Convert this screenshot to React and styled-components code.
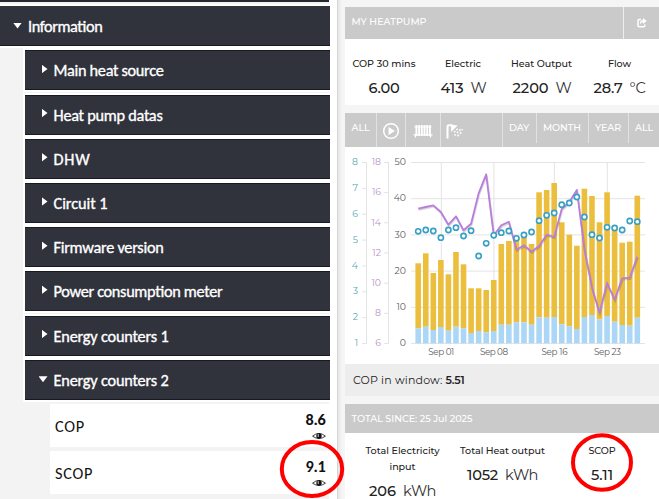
import React from 'react';
import styled, { createGlobalStyle } from 'styled-components';

const sections = [
  { name: 'Main heat source', w: 110 },
  { name: 'Heat pump datas', w: 109 },
  { name: 'DHW', w: 37 },
  { name: 'Circuit 1', w: 54 },
  { name: 'Firmware version', w: 110 },
  { name: 'Power consumption meter', w: 168.5 },
  { name: 'Energy counters 1', w: 115 },
  { name: 'Energy counters 2', w: 115, open: true },
];

const heat = [263.3, 253.3, 273, 260, 274.3, 252, 264.3, 288.3, 288.3, 290, 280, 244, 241, 237, 235, 244, 192.3, 190, 183, 222.3, 234.7, 245.7, 188.7, 196, 222.3, 192.3, 229, 242.7, 241.7, 195.7];
const elec = [328.3, 326.7, 330, 327, 330.7, 326.7, 328.3, 333, 331, 332.3, 331, 324.7, 324.7, 322.3, 322.3, 324.7, 317.3, 317.7, 317, 324.3, 326.3, 329, 317, 315, 319.3, 316, 321.7, 325, 325.7, 317.7];
const cop = [231.3, 230, 231, 237.7, 230, 227.7, 236, 230.7, 256, 243.3, 235.3, 232.7, 231, 238.3, 235, 232, 220.7, 215.3, 213, 204.7, 203, 197, 217, 234.7, 238, 227.3, 228, 230, 221, 221.7];
const outside = [208.7, 207, 205.3, 212, 224.7, 216.3, 230.3, 223.7, 193.3, 174.3, 235.3, 225.3, 221.7, 249.7, 245.3, 251.7, 246, 234.7, 237, 209, 202, 190, 249, 287.7, 312.7, 283, 299.7, 278.3, 277.7, 256.7];

const dayX = (i) => 418.2 + i * 7.555;

function Eye() {
  return (
    <svg width="14" height="8" viewBox="0 0 14 8">
      <path d="M.6 4.2Q7-1.4 13.4 4.2Q7 8.8.6 4.2Z" fill="none" stroke="#222" strokeWidth=".9" />
      <circle cx="7" cy="4" r="2.7" fill="#111" />
      <path d="M6.2 2v3" stroke="#fff" strokeWidth=".8" />
    </svg>
  );
}

function Marker({ small }) {
  return small ? (
    <svg width="62" height="59" viewBox="0 0 62 59">
      <ellipse cx="31" cy="29.5" rx="29" ry="27.3" fill="none" stroke="#f00" strokeWidth="4" />
    </svg>
  ) : (
    <svg width="66" height="60" viewBox="0 0 66 60">
      <ellipse cx="33" cy="30" rx="30.2" ry="27" fill="none" stroke="#f00" strokeWidth="4" />
    </svg>
  );
}

function Chart() {
  const line = outside.map((y, i) => `${dayX(i)},${y}`).join(' ');
  return (
    <ChartSvg viewBox="345 147 314 217">
      <g stroke="#e4e4e4" strokeWidth="1">
        {[0, 1, 2, 3, 4, 5].map((n) => (
          <path key={n} d={`M411 ${343.5 - n * 36.2}H645`} />
        ))}
        {[441.3, 493.9, 554.4, 607.3].map((x) => <path key={x} d={`M${x} 162V343`} />)}
        <path d="M366.5 162V343.5M388.5 162V343.5" />
        {[0, 1, 2, 3, 4, 5, 6, 7].map((n) => <path key={n} d={`M362 ${343.5 - n * 25.86}h4.5`} />)}
        {[0, 1, 2, 3, 4, 5, 6].map((n) => <path key={n} d={`M384 ${343.5 - n * 30.17}h4.5`} />)}
      </g>
      <g fontSize="9.3" textAnchor="end">
        <g fill="#55a9b9">
          {[1, 2, 3, 4, 5, 6, 7, 8].map((n) => <text key={n} x="358" y={346.2 - (n - 1) * 25.86}>{n}</text>)}
        </g>
        <g fill="#b795c8">
          {[6, 8, 10, 12, 14, 16, 18].map((n) => <text key={n} x="381" y={346.2 - (n - 6) * 15.08}>{n}</text>)}
        </g>
        <g fill="#5c5c5c">
          {[0, 10, 20, 30, 40, 50].map((n) => <text key={n} x="406" y={346.2 - n * 3.62}>{n}</text>)}
        </g>
      </g>
      <g fontSize="8.8" fill="#5c5c5c" textAnchor="middle">
        <text x="441.3" y="355" textLength="26">Sep 01</text>
        <text x="494" y="355" textLength="28">Sep 08</text>
        <text x="554.5" y="355" textLength="26">Sep 16</text>
        <text x="607.5" y="355" textLength="27">Sep 23</text>
      </g>
      {heat.map((y, i) => (
        <g key={i}>
          <rect x={dayX(i) - 2.8} y={y} width="5.6" height={elec[i] - y} fill="#ebbf3d" />
          <rect x={dayX(i) - 2.8} y={elec[i]} width="5.6" height={343.3 - elec[i]} fill="#acd6f5" />
        </g>
      ))}
      <polyline points={line} transform="translate(.5 1.3)" fill="none" stroke="#000" strokeOpacity=".15" strokeWidth="2" />
      <polyline points={line} fill="none" stroke="#ba7ddd" strokeWidth="1.8" strokeLinejoin="round" />
      {cop.map((y, i) => (
        <circle key={i} cx={dayX(i)} cy={y} r="2.6" fill="#fff" stroke="#37a0c4" strokeWidth="1.6" />
      ))}
    </ChartSvg>
  );
}

function Label({ children, w, ...rest }) {
  const ref = React.useRef(null);
  const [space, setSpace] = React.useState(0);
  React.useLayoutEffect(() => {
    const natural = ref.current.getBoundingClientRect().width;
    setSpace((w - natural) / children.length);
  }, [w, children]);
  return <Text ref={ref} style={{ letterSpacing: space }} {...rest}>{children}</Text>;
}

function App() {
  return (
    <Page>
      <GlobalStyle />
      <Menu>
        <Heading>
          <Arrow $open />
          <Label w={74}>Information</Label>
        </Heading>
        <SubMenu>
          {sections.map((s) => (
            <Section key={s.name}>
              <Arrow $open={s.open} />
              <Label w={s.w}>{s.name}</Label>
            </Section>
          ))}
          <Counter>
            <Label w={30}>COP</Label>
            <Reading><Label w={20}>8.6</Label><Eye /></Reading>
          </Counter>
          <Counter>
            <Label w={38}>SCOP</Label>
            <Reading>
              <Label w={20}>9.1</Label>
              <Eye />
              <Ring $left={-27} $top={-18}><Marker /></Ring>
            </Reading>
          </Counter>
        </SubMenu>
      </Menu>
      <Dashboard>
        <TitleBar>
          <Label w={75}>MY HEATPUMP</Label>
          <Share>
            <svg width="10" height="10" viewBox="0 0 10 10">
              <path d="M4.2 1.5H2.2Q1 1.5 1 2.7V7.6Q1 8.8 2.2 8.8H6.6Q7.8 8.8 7.8 7.6V6.6" fill="none" stroke="#fff" strokeWidth="1.5" />
              <path d="M6 0L9.8 3.1L6 6.1V4.3Q3.8 4.2 3 6.4Q2.5 2.2 6 1.9Z" fill="#fff" />
            </svg>
          </Share>
        </TitleBar>
        <Stats>
          <Stat $w={78}><Label w={63}>COP 30 mins</Label><Value><Label w={31}>6.00</Label></Value></Stat>
          <Stat $w={80}><Label w={36}>Electric</Label><Value><Label w={23}>413</Label><Unit><Label w={15}>W</Label></Unit></Value></Stat>
          <Stat $w={77}><Label w={61}>Heat Output</Label><Value><Label w={36}>2200</Label><Unit><Label w={15}>W</Label></Unit></Value></Stat>
          <Stat $w={79}><Label w={23}>Flow</Label><Value><Label w={29}>28.7</Label><Unit><Label w={16}>°C</Label></Unit></Value></Stat>
        </Stats>
        <Toolbar>
          <Tab $w={32}><Label w={18}>ALL</Label></Tab>
          <IconTab $w={29}>
            <svg width="18" height="18" viewBox="0 0 18 18">
              <circle cx="9" cy="9" r="7.3" fill="none" stroke="#fff" strokeWidth="1.5" />
              <path d="M6.5 5L13 9L6.5 13Z" fill="#fff" />
            </svg>
          </IconTab>
          <IconTab $w={35} $pad={6.5}>
            <svg width="20" height="14" viewBox="0 0 20 14">
              <path d="M3.4 1V12M6.1 1V12M8.8 1V12M11.5 1V12M14.2 1V12M16.9 1V12" stroke="#fff" strokeWidth="1.9" />
              <path d="M1.5 3H18.5M.5 10.8H19.5M2.5 10V13.5M17.5 10V13.5" stroke="#fff" strokeWidth="1.2" />
            </svg>
          </IconTab>
          <IconTab $w={61.5} $pad={5}>
            <svg width="18" height="15" viewBox="0 0 18 15">
              <path d="M1.5 14.5V2.5Q1.5 1.2 3 1.2H6" fill="none" stroke="#fff" strokeWidth="2" />
              <path d="M5.2.6L11.7 1.5L5 8Z" fill="#fff" />
              <path d="M8 8.3l1.3-1.3M10.3 6l1.3-1.3M8.5 11.5l1.3-1.3M11 9l1.3-1.3M13.3 6.7l1.3-1.3M11.5 12.2l1.3-1.3M14 9.7l1.3-1.3M15.7 6.2l1-1" stroke="#fff" strokeWidth="1.5" />
            </svg>
          </IconTab>
          <Tab $w={34} $short><Label w={20}>DAY</Label></Tab>
          <Tab $w={52} $short><Label w={38}>MONTH</Label></Tab>
          <Tab $w={40} $short><Label w={26}>YEAR</Label></Tab>
          <Tab $w={30.5} $short $last><Label w={18}>ALL</Label></Tab>
        </Toolbar>
        <Chart />
        <CopWindow><Label w={89.5}>COP in window:</Label><b><Label w={19}>5.51</Label></b></CopWindow>
        <Since><Label w={121}>TOTAL SINCE: 25 Jul 2025</Label></Since>
        <Totals>
          <Total $w={115}>
            <Label w={74}>Total Electricity</Label>
            <Label w={26}>input</Label>
            <Value><Label w={27}>206</Label><Unit><Label w={33}>kWh</Label></Unit></Value>
          </Total>
          <Total $w={85}>
            <Label w={85}>Total Heat output</Label>
            <Value><Label w={31}>1052</Label><Unit><Label w={33}>kWh</Label></Unit></Value>
          </Total>
          <Total $w={114}>
            <Label w={27}>SCOP</Label>
            <Value><Label w={22}>5.11</Label></Value>
            <Ring $left={26} $top={0}><Marker small /></Ring>
          </Total>
        </Totals>
      </Dashboard>
    </Page>
  );
}

export default App;

const GlobalStyle = createGlobalStyle`
  body {
    margin: 0;
    overflow: hidden;
  }
  * {
    box-sizing: border-box;
  }
  svg {
    display: block;
    flex-shrink: 0;
  }
`;

const Page = styled.div`
  display: flex;
  width: 659px;
  height: 499px;
  overflow: hidden;
  background: #f4f4f4;
`;

const Text = styled.span`
  white-space: nowrap;
`;

const Menu = styled.div`
  width: 338px;
  height: 499px;
  flex-shrink: 0;
  border-right: 1px solid #d4d4d4;
  padding-top: 6px;
  background:
    linear-gradient(#252831, #252831) 0 0 / 329px 2px no-repeat,
    linear-gradient(90deg, #f3f3f3 329px, #fff 329px);
  font-family: Carlito, Lato, sans-serif;
  font-size: 16.3px;
  font-feature-settings: 'liga' 1;
  color: #111;
`;

const Heading = styled.div`
  display: flex;
  align-items: center;
  width: 329.5px;
  height: 40px;
  padding: 1px 0 0 13px;
  color: white;
  background: #30323c;
  border-bottom: 1px solid #171925;
  outline: 2px solid white;
  -webkit-text-stroke: 0.35px white;
`;

const SubMenu = styled.div`
  width: 305px;
  margin: 4.4px 0 0 24.5px;
`;

const Section = styled.div`
  display: flex;
  align-items: center;
  height: 40px;
  margin-bottom: 4.2px;
  padding-left: 14px;
  color: white;
  background: #30323c;
  border: solid #171925;
  border-width: 1px 0;
  outline: 2px solid white;
  -webkit-text-stroke: 0.35px white;
`;

const Arrow = styled.i`
  width: ${(p) => (p.$open ? '9px' : '6px')};
  height: ${(p) => (p.$open ? '6px' : '9px')};
  margin: ${(p) => (p.$open ? '0 6px 1px 0' : '0 6px 3px 3px')};
  background: white;
  clip-path: ${(p) => (p.$open ? 'polygon(0 0, 100% 0, 50% 100%)' : 'polygon(0 0, 100% 50%, 0 100%)')};
`;

const Counter = styled.div`
  display: flex;
  align-items: center;
  justify-content: space-between;
  height: 43.5px;
  margin: 0 0 3.5px 25.5px;
  padding: 0 4px 0 5px;
  background: white;
`;

const Reading = styled.div`
  position: relative;
  display: flex;
  flex-direction: column;
  align-items: flex-end;
  font-weight: 700;
  line-height: 18px;
  padding-bottom: 2px;
  gap: 4px;
`;

const Ring = styled.div`
  position: absolute;
  left: ${(p) => p.$left}px;
  top: ${(p) => p.$top}px;
  z-index: 2;
`;

const Dashboard = styled.div`
  width: 321px;
  flex-shrink: 0;
  padding: 7px 0 0 7px;
  background: linear-gradient(90deg, #e6e6e6, #f5f5f5 4px);
  font-family: Montserrat, Inter, sans-serif;
  font-size: 9.6px;
  color: #222;
`;

const TitleBar = styled.div`
  display: flex;
  align-items: center;
  justify-content: space-between;
  height: 32px;
  padding-left: 6.5px;
  background: #cacaca;
  color: white;
  font-weight: 500;

  > span {
    padding-bottom: 4px;
  }
`;

const Share = styled.div`
  display: grid;
  place-items: center;
  width: 36px;
  height: 32px;
  border-left: 1px solid #eee;
`;

const Stats = styled.div`
  display: flex;
  height: 66px;
  padding-top: 17px;
  background: white;
`;

const Stat = styled.div`
  display: flex;
  flex-direction: column;
  align-items: center;
  width: ${(p) => p.$w}px;
  line-height: 15px;
  font-weight: 500;
`;

const Value = styled.div`
  display: flex;
  align-items: baseline;
  margin-top: 7px;
  line-height: 20px;
  font-size: 14.6px;
  font-weight: 500;
`;

const Unit = styled.span`
  margin-left: 7px;
  font-weight: 400;
  color: #333;
`;

const Toolbar = styled.div`
  display: flex;
  height: 34px;
  margin-top: 8px;
  background: #cacaca;
  color: white;
`;

const Tab = styled.div`
  width: ${(p) => p.$w}px;
  height: ${(p) => (p.$short ? '30px' : '34px')};
  padding: 9px 0 0 6.5px;
  line-height: 12px;
  border-right: ${(p) => (p.$last ? 'none' : '1px solid #e2e2e2')};
  font-weight: 500;
`;

const IconTab = styled(Tab)`
  display: flex;
  align-items: center;
  padding: 2px 0 0 ${(p) => p.$pad || 5}px;
`;

const ChartSvg = styled.svg`
  width: 314px;
  height: 217px;
  background: white;
`;

const CopWindow = styled.div`
  display: flex;
  align-items: center;
  gap: 3px;
  height: 32px;
  padding-left: 8px;
  background: #ededed;
  font-size: 11px;

  b {
    font-weight: 600;
  }
`;

const Since = styled.div`
  display: flex;
  align-items: center;
  height: 29px;
  margin-top: 8px;
  padding-left: 6.5px;
  background: #cacaca;
  color: white;
  font-weight: 500;
`;

const Totals = styled.div`
  display: flex;
  height: 66px;
  background: white;

  ${Value} {
    margin-top: 9px;
    line-height: 14px;
  }
`;

const Total = styled.div`
  position: relative;
  display: flex;
  flex-direction: column;
  align-items: center;
  width: ${(p) => p.$w}px;
  padding-top: 10px;
  line-height: 16px;
  font-weight: 500;
`;
